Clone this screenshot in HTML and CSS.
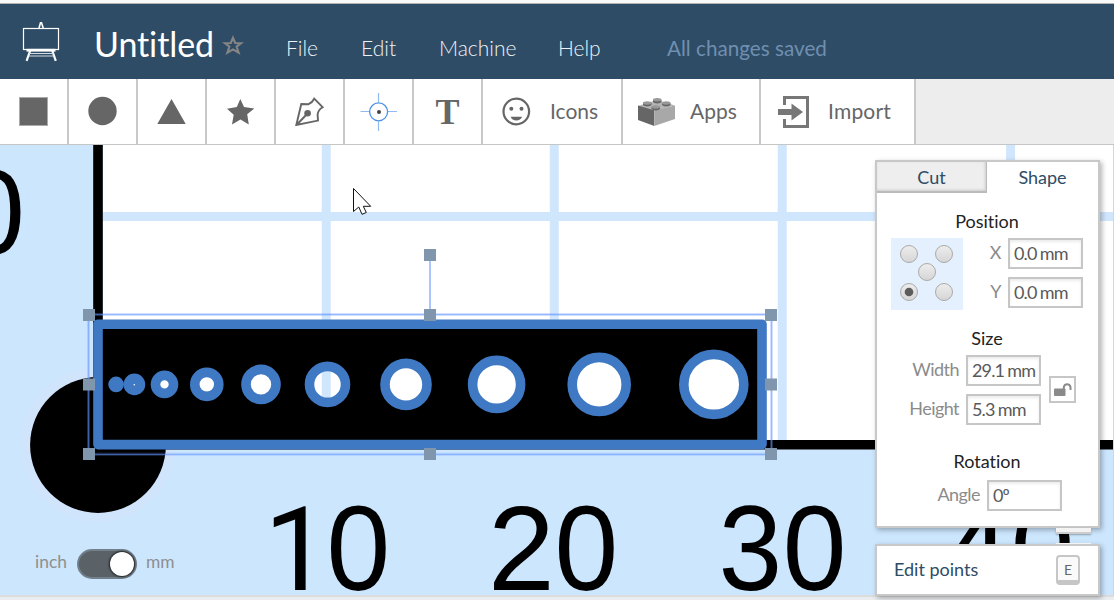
FILE: index.html
```html
<!DOCTYPE html>
<html lang="en">
<head>
<meta charset="utf-8">
<title>Untitled</title>
<link rel="stylesheet" href="styles.css">
</head>
<body>
<div class="app">
  <header class="header">
    <svg class="logo" width="38" height="42" viewBox="22 20 38 42">
      <path d="M39 28 L40.5 22.7 H41.5 L43.2 28" fill="none" stroke="#fff" stroke-width="1.6"/>
      <rect x="23.5" y="28.5" width="35" height="21" fill="none" stroke="#fff" stroke-width="1.2"/>
      <path d="M26.5 50.2 H55.500" stroke="#fff" stroke-width="2.8"/>
      <path d="M30.2 50.5 L26.6 60.8 M52.2 50.5 L55.8 60.8" stroke="#fff" stroke-width="2.2"/>
      <path d="M29 53.5 H53.5 M28.5 56 H54" stroke="#d5dde4" stroke-width="1"/>
    </svg>
    <h1 class="title">Untitled</h1>
    <svg class="fav" width="22" height="20" viewBox="222 35 22 20">
      <path fill="none" stroke="#858585" stroke-width="2.1" d="M233 37.8 L235.200 43 L241.1 43.2 L236.6 46.7 L238.6 52.700 L233 49.4 L227.4 52.700 L229.4 46.7 L224.9 43.2 L230.8 43Z"/>
    </svg>
    <nav class="menu">
      <a class="menu-file">File</a><a class="menu-edit">Edit</a><a class="menu-machine">Machine</a><a class="menu-help">Help</a>
    </nav>
    <span class="status">All changes saved</span>
  </header>

  <div class="toolbar">
    <div class="tool"><svg width="30" height="30"><rect x="1.5" y="1.5" width="28" height="28" fill="#666" stroke="#aaa"/></svg></div>
    <div class="tool"><svg width="30" height="30"><circle cx="15.500" cy="15" r="14.200" fill="#666"/></svg></div>
    <div class="tool"><svg width="30" height="30"><path d="M15.500 3 L29.700 28 H1.300Z" fill="#666"/></svg></div>
    <div class="tool"><svg width="30" height="30"><path d="M15.3 3 L19 10.900 L29.300 12.400 L22.200 18.300 L23.800 28.400 L15.500 23.500 L7 28.400 L8.700 18.700 L2 12.800 L11.800 11Z" fill="#666"/></svg></div>
    <div class="tool"><svg width="30" height="30" viewBox="294 96 30 30"><path d="M296.3 125 L301.3 104 L308.600 104.200 C311 103.200 313 101 314.200 98.700 L322.600 107.200 C319.500 109 318 111 317.600 114.500 L318 120.600 Z M297 124.500 L307.500 113.500" fill="none" stroke="#666" stroke-width="1.900"/><circle cx="307.600" cy="113.300" r="3.300" fill="#666"/></svg></div>
    <div class="tool"><svg width="38" height="40" viewBox="359 91 38 40"><path d="M378.500 93 V102 M378.500 121.500 V131 M360.500 111.500 H369.500 M388 111.500 H397" stroke="#90bbef" stroke-width="1.200"/><circle cx="378.600" cy="111.800" r="9" fill="none" stroke="#4a90e8" stroke-width="1.300"/><circle cx="379" cy="112" r="2" fill="#444"/></svg></div>
    <div class="tool tool-text">T</div>
    <div class="tool tool-icons"><svg width="30" height="30"><circle cx="15.300" cy="15.500" r="12.800" fill="none" stroke="#666" stroke-width="2.200"/><circle cx="10.300" cy="12.800" r="2" fill="#666"/><circle cx="20.500" cy="12.800" r="2" fill="#666"/><path d="M9.600 20.800 H21.100 C19.800 25.600 10.800 25.600 9.600 20.800Z" fill="#666"/></svg><span>Icons</span></div>
    <div class="tool tool-apps"><svg width="38" height="30" viewBox="638 96 38 30">
      <path d="M638 106 L657 100 L675 105.500 L654.500 110.500Z" fill="#b4b4b4"/>
      <path d="M638 105.500 L654.300 110.300 V126 L638 120Z" fill="#666"/><path d="M654.300 110.300 L675 105.500 V119 L654.300 126Z" fill="#a8a8a8"/>
      <g fill="#666"><path d="M643 103 V105 A4.500 2.200 0 0 0 651.500 105 V103Z M653 100 V102 A4.500 2.200 0 0 0 661.500 102 V100Z M662 103 V105 A4.500 2.200 0 0 0 670.500 105 V103Z M651.500 107 V109 A4.500 2.200 0 0 0 660 109 V107Z"/></g>
      <g fill="#989898"><ellipse cx="647.250" cy="103" rx="4.300" ry="1.700"/><ellipse cx="657.250" cy="99.700" rx="4.300" ry="1.700"/><ellipse cx="666.250" cy="103" rx="4.300" ry="1.700"/><ellipse cx="655.750" cy="107" rx="4.300" ry="1.700"/></g>
    </svg><span>Apps</span></div>
    <div class="tool tool-import"><svg width="32" height="34" viewBox="778 94 32 34"><path d="M784.500 105 V97.500 H807.500 V126.500 H784.500 V119" fill="none" stroke="#777" stroke-width="3"/><path d="M778 109 H791.500 V103.500 L803 112 L791.500 120.500 V115 H778Z" fill="#777"/></svg><span>Import</span></div>
  </div>

  <main class="workspace">
    <svg class="bed" width="1114" height="450" viewBox="0 145 1114 450">
      <defs>
        <mask id="holes">
          <rect x="90" y="316" width="680" height="140" fill="#fff"/>
          <g fill="#000"><circle cx="164.500" cy="384.400" r="9"/><circle cx="206.800" cy="384.400" r="12"/><circle cx="261" cy="384.400" r="15"/><circle cx="327.500" cy="384.400" r="18"/><circle cx="406" cy="384.400" r="21"/><circle cx="496.600" cy="384.400" r="24"/><circle cx="599.200" cy="384.400" r="27"/><circle cx="713.800" cy="384.400" r="30"/></g>
        </mask>
      </defs>
      <rect x="0" y="145" width="1114" height="450" fill="#cce6fe"/>
      <circle cx="98" cy="445" r="77" fill="#d0e4fc"/>
      <rect x="103" y="145" width="1010" height="295" fill="#fff"/>
      <path d="M326.200 145 V440 M554.300 145 V440 M782.200 145 V440 M1010.600 145 V440 M103 216.500 H1113" stroke="#d0e6fd" stroke-width="9"/>
      <path d="M98 145 V444.800 H1113" fill="none" stroke="#000" stroke-width="9.600"/>
      <circle cx="98" cy="445" r="67.900" fill="#000"/>
      <g class="ruler">
        <text x="-38.800" y="253.800" textLength="63.700" lengthAdjust="spacingAndGlyphs">0</text>
        <text class="ruler-one" x="264" y="590">1</text>
        <text x="326.500" y="590" textLength="63.700" lengthAdjust="spacingAndGlyphs">0</text>
        <text x="488" y="590">2</text>
        <text x="554.600" y="590" textLength="63.700" lengthAdjust="spacingAndGlyphs">0</text>
        <text x="718.600" y="590" textLength="63.700" lengthAdjust="spacingAndGlyphs">3</text>
        <text x="782.700" y="590" textLength="63.700" lengthAdjust="spacingAndGlyphs">0</text>
        <text x="943.500" y="590">4</text>
        <text x="1010.800" y="590" textLength="63.700" lengthAdjust="spacingAndGlyphs">0</text>
      </g>
      <rect x="98" y="324" width="664" height="120.500" fill="#000" mask="url(#holes)"/>
      <g fill="none" stroke="#4079c3" stroke-width="9.600">
        <rect x="98" y="324.200" width="664" height="120.400" stroke-linejoin="round"/>
        <circle cx="164.500" cy="384.400" r="9"/><circle cx="206.800" cy="384.400" r="12"/><circle cx="261" cy="384.400" r="15"/><circle cx="327.500" cy="384.400" r="18"/><circle cx="406" cy="384.400" r="21"/><circle cx="496.600" cy="384.400" r="24"/><circle cx="599.200" cy="384.400" r="27"/><circle cx="713.800" cy="384.400" r="30"/>
      </g>
      <circle cx="116.100" cy="384.400" r="7.800" fill="#4079c3"/><circle cx="134.400" cy="384.400" r="10.800" fill="#4079c3"/><circle cx="134.300" cy="384.700" r=".8" fill="#fff"/>
      <g fill="none" stroke="#6496ff"><rect x="88.500" y="314.500" width="683" height="139.700" stroke-width="3" opacity=".3"/><rect x="88.500" y="314.500" width="683" height="140" stroke-width="1" opacity=".5"/><path d="M430 261 V309" stroke-width="2" opacity=".55"/></g>
      <g fill="#8096ad"><rect x="424" y="249" width="12" height="12"/><rect x="83" y="309" width="12" height="12"/><rect x="424" y="309" width="12" height="12"/><rect x="765" y="309" width="12" height="12"/><rect x="83" y="378.500" width="12" height="12"/><rect x="765" y="378.500" width="12" height="12"/><rect x="83" y="448" width="12" height="12"/><rect x="424" y="448" width="12" height="12"/><rect x="765" y="448" width="12" height="12"/></g>
      <path d="M1113.500 145 V595" stroke="#d6d6d6"/>
      <path d="M353.500 188.500 V211.500 L358.800 207 L362 214.300 L366.300 212.500 L363.300 206.300 H370.700Z" fill="#fff" stroke="#111"/>
    </svg>
    <div class="units"><span>inch</span><span class="switch"><i></i></span><span>mm</span></div>
    <aside class="side">
      <section class="panel">
        <div class="tabs"><div class="tab">Cut</div><div class="tab tab-active">Shape</div></div>
        <h2 class="h-position">Position</h2>
        <div class="position">
          <div class="anchor">
            <svg width="72" height="72">
              <defs><linearGradient id="knob" x2="0" y2="1"><stop stop-color="#eee"/><stop offset="1" stop-color="#d5d5d5"/></linearGradient></defs>
              <g fill="url(#knob)" stroke="#aaa"><circle cx="18" cy="16" r="8.500"/><circle cx="53" cy="16" r="8.500"/><circle cx="36" cy="34" r="8.500"/><circle cx="18" cy="54" r="8.500"/><circle cx="53" cy="54" r="8.500"/></g><circle cx="18" cy="54" r="4.300" fill="#5c5c5c"/>
            </svg>
          </div>
          <div class="fields">
            <label><span>X</span><span class="input">0.0 mm</span></label>
            <label><span>Y</span><span class="input">0.0 mm</span></label>
          </div>
        </div>
        <h2 class="h-size">Size</h2>
        <div class="size">
          <div class="fields">
            <label><span>Width</span><span class="input">29.1 mm</span></label>
            <label><span>Height</span><span class="input">5.3 mm</span></label>
          </div>
          <div class="lock"><svg width="23" height="23"><path d="M12.800 12 V9 A3.500 3.700 0 0 1 19.500 9 V12" fill="none" stroke="#8a8a8a" stroke-width="2"/><rect x="3" y="10.500" width="11.500" height="7.500" rx="1" fill="#8a8a8a"/></svg></div>
        </div>
        <h2 class="h-rotation">Rotation</h2>
        <div class="rotation"><label><span>Angle</span><span class="input">0º</span></label></div>
      </section>
      <div class="gap"><span class="key-end"></span><span class="key-start"></span></div>
      <section class="panel actions"><span>Edit points</span><kbd>E</kbd></section>
    </aside>
  </main>
  <footer class="footer"></footer>
</div>
</body>
</html>
```
FILE: styles.css
```css
* { box-sizing: border-box; }
body { margin: 0; font-family: Lato, "Liberation Sans", sans-serif; font-variant-ligatures: none; }
svg { display: block; flex: none; }
.app { width: 1114px; height: 600px; overflow: hidden; display: flex; flex-direction: column; border-top: 3px solid #f8f8f8; }
.header { height: 76px; flex: none; display: flex; align-items: flex-start; background: #2e4c66; border-top: 1px solid #b3b3b3; color: #fff; white-space: nowrap; }
.logo { margin: 16px 0 0 22px; }
.title { width: 128px; margin: 20px 0 0 34px; font-size: 34px; line-height: 40px; font-weight: 400; letter-spacing: -.1px; }
.fav { margin-top: 31px; }
.menu { display: flex; margin: 30px 0 0 42px; font-size: 21px; line-height: 28px; color: #eef2f5; font-weight: 300; }
.menu-file { width: 75px; }
.menu-edit { width: 78px; }
.menu-machine { width: 119px; }
.menu-help { width: 109px; }
.status { margin-top: 30px; font-size: 20.7px; line-height: 28px; color: #6f8fb0; }

.toolbar { height: 66px; flex: none; display: flex; background: #ededed; border-bottom: 1px solid #c6c6c6; color: #666; font-size: 21px; }
.tool { width: 69px; flex: none; display: flex; align-items: center; justify-content: center; padding: 0 1px 1px 0; background: #fff; border-right: 2px solid #c8c8c8; }
.tool span { margin-top: -2px; }
.tool-text { padding: 0; font: bold 36px "Liberation Serif", serif; }
.tool-icons, .tool-apps, .tool-import { justify-content: flex-start; }
.tool-icons { width: 140px; padding-left: 18px; gap: 19px; }
.tool-apps { width: 138px; padding-left: 15px; gap: 14px; }
.tool-import { width: 155px; padding-left: 17px; gap: 18px; letter-spacing: .2px; }

.workspace { position: relative; height: 450px; flex: none; }
.ruler { font: 120px "Liberation Sans", Arial, sans-serif; }
.ruler-one { font: 117px Roboto, sans-serif; }
.units { position: absolute; left: 35px; top: 403px; display: flex; align-items: center; gap: 10px; height: 30px; color: #8f8f8f; font-size: 17.4px; line-height: 26px; }
.units span:not(.switch) { margin-top: -3px; }
.units span:last-child { margin-left: -1px; }
.switch { width: 60px; height: 30px; margin-top: 1px; padding: 1px; display: flex; justify-content: flex-end; background: #5a6167; border: 2px solid #72808c; border-radius: 15px; }
.switch i { width: 24px; height: 24px; border-radius: 50%; background: #fff; box-shadow: 0 0 2px 1px #222; }

.side { position: absolute; left: 875px; top: 15px; width: 225px; }
.panel { background: #fff; border: 2px solid #c8c8c8; box-shadow: 2px 2px 5px rgba(0, 0, 0, .3); height: 368px; }
.tabs { display: flex; height: 31px; font-size: 18px; line-height: 31px; color: #2e4c66; text-align: center; }
.tab { width: 110px; background: #eee; border-right: 1px solid #bbb; border-bottom: 2px solid #bbb; box-shadow: inset -1px -1px 3px rgba(0, 0, 0, .15); }
.tab-active { width: 111px; background: #fff; border: 0; box-shadow: none; }
h2 { margin: 0; text-align: center; font-size: 18px; line-height: 24px; font-weight: 400; color: #222; padding-right: 1px; }
.h-position { padding-top: 16px; height: 45px; }
.position { display: flex; justify-content: space-between; padding: 0 15px 0 14px; height: 88px; }
.anchor { width: 72px; height: 72px; background: #e4f0fd; }
.fields { display: flex; flex-direction: column; gap: 8px; }
label { display: flex; align-items: center; justify-content: flex-end; gap: 7px; height: 31px; color: #8b8b8b; font-size: 18px; line-height: 22px; letter-spacing: -.55px; }
label span:first-child { margin-top: -3px; }
.input { width: 75px; height: 31px; padding-left: 4px; border: 2px solid #c6c6c6; color: #595959; line-height: 26px; letter-spacing: -.85px; word-spacing: -.6px; box-shadow: inset 0 2px 3px rgba(0, 0, 0, .08); white-space: nowrap; }
.h-size { height: 29px; }
.size { display: flex; align-items: flex-start; justify-content: flex-end; gap: 8px; padding-right: 22px; height: 70px; }
.lock { width: 27px; height: 27px; margin-top: 21px; border: 2px solid #c6c6c6; }
.h-rotation { padding-top: 24px; height: 55px; }
.rotation { padding-right: 36px; }
.gap { height: 16px; display: flex; flex-direction: column; justify-content: space-between; align-items: flex-end; padding-right: 9px; }
.gap span { width: 35px; background: #f3f3f3; }
.key-end { height: 6px; border-bottom: 2px solid #ccc; box-shadow: 0 1px 2px rgba(0, 0, 0, .3); }
.key-start { height: 1px; }
.actions { height: 52px; display: flex; align-items: center; justify-content: space-between; padding: 0 18px 2px 17px; font-size: 18px; color: #2e4c66; }
kbd { width: 24px; height: 30px; margin-top: 2px; border: 2px solid #c6c6c6; border-bottom-width: 5px; border-radius: 4px; background: #fafafa; color: #666; font: 14px/25px Lato, sans-serif; text-align: center; }
.footer { height: 5px; flex: none; background: #e9edf0; border-top: 2px solid #dcdcdc; }
```
